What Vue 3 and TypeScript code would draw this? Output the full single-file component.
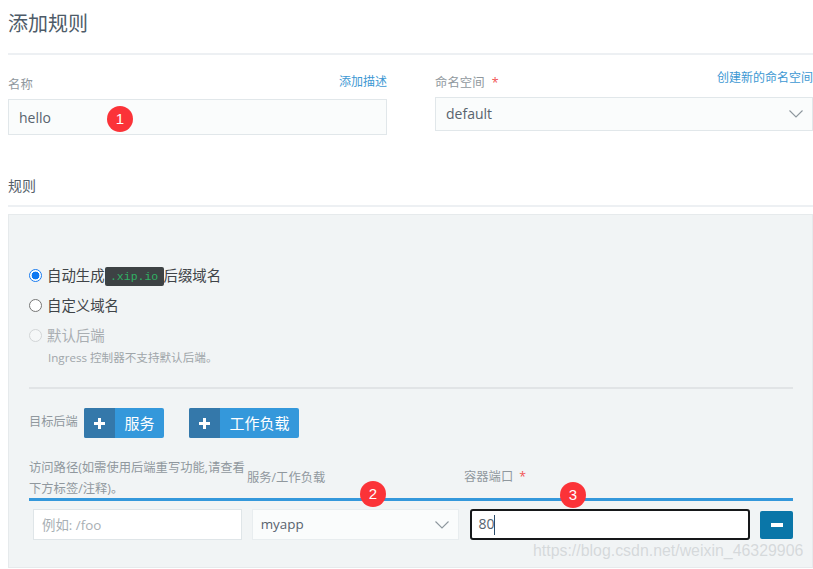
<script setup lang="ts">
const backends = [
  { label: '服务', cls: 'add-btn--service' },
  { label: '工作负载', cls: 'add-btn--workload' },
]
const badges = [
  { n: 1, cls: 'badge--one' },
  { n: 2, cls: 'badge--two' },
  { n: 3, cls: 'badge--three' },
]
</script>

<template>
  <div class="page">
    <h1 class="title">添加规则</h1>

    <div class="top-fields">
      <div class="field field--name">
        <div class="field-head">
          <label class="lbl">名称</label>
          <a class="link">添加描述</a>
        </div>
        <div class="box box--name">hello</div>
      </div>
      <div class="field field--ns">
        <div class="field-head">
          <label class="lbl">命名空间 <span class="req">*</span></label>
          <a class="link">创建新的命名空间</a>
        </div>
        <div class="box box--ns">
          <span class="box-text">default</span>
          <svg class="chevron" width="14" height="8" viewBox="0 0 14 8" fill="none">
            <path d="M.5 .5L7 7L13.5 .5" stroke="#8d979e" stroke-width="1.1"/>
          </svg>
        </div>
      </div>
    </div>

    <h2 class="section">规则</h2>

    <section class="panel">
      <div class="radio-row">
        <span class="radio radio--on"></span>
        <span class="radio-text">自动生成</span><code class="domain">.xip.io</code><span class="radio-text">后缀域名</span>
      </div>
      <div class="radio-row">
        <span class="radio"></span>
        <span class="radio-text">自定义域名</span>
      </div>
      <div class="radio-row radio-row--off">
        <span class="radio radio--off"></span>
        <span class="radio-text">默认后端</span>
      </div>
      <p class="hint">Ingress 控制器不支持默认后端。</p>

      <hr class="rule" />

      <div class="targets">
        <span class="targets-lbl">目标后端</span>
        <button v-for="b in backends" :key="b.label" :class="['add-btn', b.cls]">
          <span class="add-btn__icon">
            <svg width="13" height="13" viewBox="0 0 13 13"><path d="M5 1h3v4h4v3H8v4H5V8H1V5h4z" fill="#fff"/></svg>
          </span>
          <span class="add-btn__text">{{ b.label }}</span>
        </button>
      </div>

      <div class="table-head">
        <div class="th th--path">访问路径(如需使用后端重写功能,请查看下方标签/注释)。</div>
        <div class="th th--svc">服务/工作负载</div>
        <div class="th th--port">容器端口<span class="req">*</span></div>
      </div>
      <div class="table-row">
        <div class="cell cell--path"><span>例如: /foo</span></div>
        <div class="cell cell--svc">
          <span>myapp</span>
          <svg class="chevron" width="14" height="8" viewBox="0 0 14 8" fill="none">
            <path d="M.5 .5L7 7L13.5 .5" stroke="#8d979e" stroke-width="1.1"/>
          </svg>
        </div>
        <div class="cell cell--port"><span>80</span><i class="caret"></i></div>
        <button class="remove"><span></span></button>
      </div>
    </section>

    <span v-for="b in badges" :key="b.n" :class="['badge', b.cls]">{{ b.n }}</span>
    <span class="watermark">https://blog.csdn.net/weixin_46329906</span>
  </div>
</template>

<style>
html, body { margin: 0; background: #fff; }
</style>

<style scoped>
.page {
  position: relative;
  width: 813px;
  height: 569px;
  overflow: hidden;
  box-sizing: border-box;
  padding-left: 8px;
  background: #fff;
  color: #4d5a66;
  font-family: "Open Sans", "Noto Sans CJK SC", sans-serif;
}

/* headings */
.title {
  margin: 0;
  height: 55px;
  box-sizing: border-box;
  padding-top: 9px;
  border-bottom: 2px solid #edf0f3;
  font-size: 20px;
  line-height: 30px;
  font-weight: 400;
  color: #4e5b68;
}
.section {
  margin: 0;
  height: 37px;
  box-sizing: border-box;
  padding-top: 6px;
  border-bottom: 2px solid #edf0f3;
  font-size: 14px;
  line-height: 20px;
  font-weight: 400;
  color: #55606a;
}

/* top form */
.top-fields {
  display: flex;
  gap: 48px;
  height: 115px;
}
.field { width: 379px; }
.field--ns { width: 378px; }
.field-head {
  display: flex;
  justify-content: space-between;
}
.field--name .field-head { height: 44px; align-items: flex-end; padding-bottom: 5px; box-sizing: border-box; }
.field--ns .field-head { height: 42px; align-items: flex-end; padding-bottom: 5px; box-sizing: border-box; }
.lbl {
  font-size: 12.4px;
  line-height: 18px;
  color: #90989e;
}
.link {
  position: relative;
  top: -4px;
  font-size: 12px;
  line-height: 16px;
  color: #3d98d3;
}
.field--ns .link { top: -6px; }
.req { color: #f15354; margin-left: 4px; }
.box {
  display: flex;
  align-items: center;
  justify-content: space-between;
  box-sizing: border-box;
  padding: 0 9px 0 10px;
  background: #fafcfc;
  border: 1px solid #e1e7ea;
  font-size: 14px;
  color: #58636e;
}
.box--name { height: 36px; }
.box--ns { height: 34px; }
.box-text { margin-top: -2px; }

/* panel */
.panel {
  height: 354px;
  margin-top: 7px;
  box-sizing: border-box;
  padding: 0 19px 0 20px;
  background: #f1f4f5;
  border: 1px solid #e6eaec;
  font-size: 14.4px;
  color: #3f4448;
}
.radio-row {
  display: flex;
  align-items: center;
  height: 30px;
}
.radio-row:first-child { margin-top: 45px; }
.radio-row--off { color: #a9aeb2; }
.radio-text { margin-top: -2px; }
.radio {
  width: 11px;
  height: 11px;
  margin-right: 5px;
  border: 1px solid #767676;
  border-radius: 50%;
  background: #fff;
  flex: none;
}
.radio--on {
  border-color: #1a7cf0;
  background: radial-gradient(circle, #0f78f2 0 3.6px, #fff 4.2px);
}
.radio--off { border-color: #d2d5d7; background: #f5f7f8; }
.domain {
  box-sizing: border-box;
  width: 59px;
  height: 19px;
  margin-top: 2px;
  text-align: center;
  border-radius: 2px;
  background: #3d4244;
  color: #30b063;
  font-family: "Liberation Mono", monospace;
  font-size: 11.5px;
  line-height: 19px;
}
.hint {
  margin: 0;
  padding-left: 19px;
  font-size: 11.6px;
  line-height: 15px;
  color: #a0a6aa;
}
.rule {
  height: 2px;
  margin: 22px 0 0;
  border: 0;
  background: #e1e4e6;
}

/* backend buttons */
.targets {
  display: flex;
  align-items: center;
  margin-top: 19px;
  height: 30px;
}
.targets-lbl {
  width: 55px;
  margin-top: -4px;
  font-size: 12.2px;
  color: #90989e;
}
.add-btn {
  display: flex;
  align-items: stretch;
  height: 30px;
  padding: 0;
  border: 0;
  border-radius: 2px;
  overflow: hidden;
  background: #3498db;
  color: #fff;
  font-family: inherit;
  font-size: 15px;
}
.add-btn--service { width: 80px; }
.add-btn--workload { width: 110px; margin-left: 25px; }
.add-btn__icon {
  display: flex;
  align-items: center;
  justify-content: center;
  width: 31px;
  background: #3478aa;
}
.add-btn__text {
  flex: 1;
  line-height: 30px;
  text-align: center;
}

/* ingress table */
.table-head {
  display: flex;
  align-items: flex-end;
  height: 60px;
  border-bottom: 3px solid #3498db;
  font-size: 12.3px;
  color: #90989e;
}
.th--path { width: 218px; line-height: 21px; margin-bottom: -1px; }
.th--svc { width: 217px; line-height: 21px; padding-bottom: 10px; }
.th--port { line-height: 21px; padding-bottom: 11px; }
.th--port .req { margin-left: 6px; }
.table-row {
  display: flex;
  align-items: center;
  gap: 10px;
  height: 31px;
  margin-top: 8px;
  padding-left: 4px;
}
.cell {
  display: flex;
  align-items: center;
  justify-content: space-between;
  box-sizing: border-box;
  height: 31px;
  padding: 0 8px;
  background: #fff;
  border: 1px solid #dfe5e8;
  font-size: 13.4px;
  color: #58636e;
}
.cell > span { margin-top: -2px; }
.cell--path { width: 209px; color: #a8afb4; }
.cell--svc { width: 208px; padding-right: 9px; background: #fafcfc; border-color: #e8edef; }
.cell--port {
  width: 280px;
  margin-left: 1px;
  justify-content: flex-start;
  padding: 0 6px;
  border: 2px solid #16181a;
  border-radius: 3px;
  font-size: 14px;
}
.caret {
  width: 1px;
  height: 20px;
  background: #2b4c6a;
}
.remove {
  display: flex;
  align-items: center;
  justify-content: center;
  width: 33px;
  height: 28px;
  padding: 0;
  border: 0;
  border-radius: 2px;
  background: #0a76a8;
}
.remove span {
  width: 12px;
  height: 4px;
  background: #fff;
}

/* overlays */
.badge {
  position: absolute;
  width: 26px;
  height: 26px;
  border-radius: 50%;
  background: #fb3338;
  color: #fff;
  font-family: "Liberation Sans", sans-serif;
  font-size: 15px;
  line-height: 26px;
  text-align: center;
}
.badge--one { left: 107px; top: 106px; }
.badge--two { left: 360px; top: 481px; }
.badge--three { left: 560px; top: 482px; }
.watermark {
  position: absolute;
  left: 533px;
  top: 541px;
  font-family: "Liberation Sans", sans-serif;
  font-size: 15.9px;
  line-height: 20px;
  color: rgba(190, 194, 197, 0.55);
  white-space: nowrap;
}
</style>
